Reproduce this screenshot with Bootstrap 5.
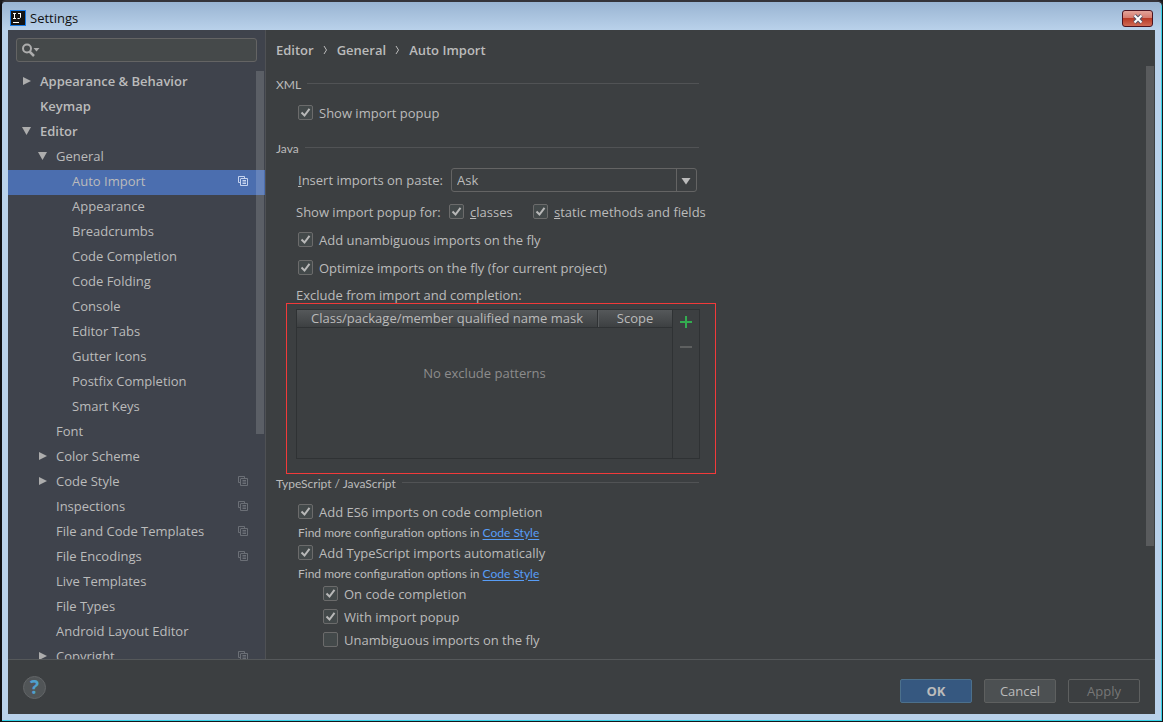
<!DOCTYPE html>
<html lang="en">
<head>
<meta charset="utf-8">
<meta name="viewport" content="width=device-width, initial-scale=1">
<title>Settings</title>
<link href="https://cdn.jsdelivr.net/npm/bootstrap@5.3.0/dist/css/bootstrap.min.css" rel="stylesheet">
<style>
:root { --ink: #bbbbbb; --panel: #3c3f41; --side: #3f434c; --line: #515355; }
body { font-family: "Open Sans", "Noto Sans", sans-serif; font-size: 13px; line-height: 20px; color: var(--ink); background: #1b1b1f; height: 100vh; overflow: hidden; }
.window { height: 100vh; background: #b9d1ea; border: 1px solid #16161a; border-top: 2px solid #35343a; border-left: 2px solid #101014; border-radius: 6px 6px 0 0; padding: 0 7px 7px 6px; box-shadow: inset -1px -1px 0 #35d3e8; }
.titlebar { height: 28px; background: linear-gradient(#99b4d2, #b9d1ea); color: #111; margin: 0 -6px 0 -6px; padding: 0 8px; border-radius: 4px 4px 0 0; }
.titlebar h1 { font-size: 13px; line-height: 20px; font-weight: 400; padding-top: 6px; }
.close-btn { width: 31px; height: 17px; border: 1px solid #4b1320; border-radius: 3px; background: linear-gradient(#e3a399 0, #d5796c 48%, #b83a26 50%, #cf6a55 100%); }
.side { width: 258px; background: var(--side); border-right: 1px solid #4f5154; padding-top: 8px; }
.search-box { height: 24px; margin: 0 8px; background: #45494a; border: 1px solid #646464; border-radius: 3px; }
.search-box input { background: none; border: 0; color: var(--ink); outline: 0; font-size: 13px; }
.tree { margin: 8px 0 0; overflow: hidden; }
.tree a { height: 25px; flex: none; color: var(--ink); text-decoration: none; padding-right: 17px; padding-bottom: 2px; }
.tree a > span { flex: 1; }
.tree a.top { font-weight: 600; padding-left: 32px; }
.tree a.mid { padding-left: 48px; }
.tree a.leaf { padding-left: 64px; }
.tree a.on { background: #4b6eaf; }
.tree .arrow { width: 10px; height: 10px; margin-right: 8px; margin-left: -18px; fill: #adadad; flex: none; }
.tree .copy { width: 10px; height: 10px; fill: none; stroke: #6b6f76; flex: none; }
.tree a.on .copy { stroke: #c5d3ee; }
.side-bar { right: 1px; top: 1px; width: 8px; height: 363px; background: rgba(255,255,255,.15); }
.main-bar { right: 1px; top: 36px; width: 8px; height: 480px; background: #595b5d; }
.main-pane { background: var(--panel); padding: 10px 0 0 10px; overflow: hidden; }
.crumbs { font-weight: 600; gap: 9px; }
.crumbs svg { width: 5px; height: 10px; fill: none; stroke: var(--ink); }
.settings { max-width: 440px; }
.section-head { font-family: Lato, "Open Sans", sans-serif; font-size: 12px; line-height: 20px; font-weight: 400; margin: 0 17px 0 0; gap: 6px; }
.section-head::after { content: ""; flex: 1; height: 1px; background: var(--line); margin-bottom: 3px; }
.first-head { margin-top: 15px; }
.group { padding-left: 22px; }
.wide-group { padding-left: 20px; }
.paste-row { padding-top: 9px; }
.popup-row { padding-top: 10px; white-space: nowrap; }
.popup-row .tick { min-width: 84px; }
.lead-label { width: 153px; flex: none; white-space: nowrap; }
.exclude-label { padding-top: 10px; line-height: 15px; }
.tick { min-height: 20px; margin: 0; padding: 0; gap: 6px; }
.tick .form-check-input { float: none; margin: 0; width: 15px; height: 15px; background-color: #43494a; border: 1px solid #6b6b6b; border-radius: 2px; box-shadow: none; flex: none; }
.tick .form-check-input:checked { background-color: #43494a; border-color: #6b6b6b; background-image: url("data:image/svg+xml,%3Csvg xmlns='http://www.w3.org/2000/svg' viewBox='0 0 13 13'%3E%3Cpath d='M2.500 6.500L5.500 9.500L10.500 2.800' fill='none' stroke='%23b8b8b8' stroke-width='2'/%3E%3C/svg%3E"); background-size: 13px 13px; }
.paste-select { width: 246px; height: 24px; padding: 0 28px 0 5px; font-size: 13px; line-height: 22px; color: var(--ink); border: 1px solid #646464; border-radius: 3px; background-color: var(--panel); background-image: url("data:image/svg+xml,%3Csvg xmlns='http://www.w3.org/2000/svg' viewBox='0 0 20 22'%3E%3Cpath d='M0 0H1V22H0Z' fill='%23646464'/%3E%3Cpath d='M5.5 9H14.5L10 15.5Z' fill='%23bbbbbb'/%3E%3C/svg%3E"); background-size: 20px 22px; background-position: right center; }
.marked { border: 1px solid #f23a3a; margin-left: 10px; padding: 5px 15px 14px 9px; }
.excludes { border: 1px solid #2f3234; height: 150px; }
.excludes table { font-size: 13px; border-collapse: separate; border-spacing: 0; }
.excludes th { height: 18px; padding: 0; font-weight: 400; line-height: 17px; text-align: center; background: linear-gradient(#55585a, #3d4042); border-bottom: 1px solid #2f3234; }
.excludes th + th { border-left: 1px solid #2f3234; width: 75px; box-shadow: inset 1px 0 0 #5a5d5f; }
.excludes td { height: 91px; text-align: center; color: #8c8c8c; padding: 0; }
.tools { width: 27px; border-left: 1px solid #2f3234; padding-top: 6px; }
.tools button { background: none; border: 0; padding: 0; height: 25px; line-height: 0; display: flex; align-items: flex-start; justify-content: center; }
.hint { font-family: Lato, "Open Sans", sans-serif; font-size: 12px; line-height: 21px; }
.hint a { color: #589df6; text-underline-offset: 2px; }
.nested { padding-left: 25px; gap: 3px; }
.bottom { background: var(--panel); border-top: 1px solid #55585a; height: 55px; padding: 0 15px; gap: 12px; }
.bottom .btn { width: 72px; height: 24px; padding: 0; margin-top: 8px; font-size: 13px; line-height: 22px; border-radius: 2px; border: 1px solid #5e6060; background: #4c5052; color: var(--ink); }
.bottom .btn.ok { background: #365880; border-color: #4c708c; font-weight: 700; margin-left: auto; }
.bottom .btn:disabled { background: var(--panel); color: #777; opacity: 1; }
.help { width: 23px; height: 23px; border: 1px solid #626567; background: #515557; border-radius: 50%; padding: 0; color: #4fa0cc; font-size: 19px; line-height: 21px; font-weight: 700; }
</style>
</head>
<body>
<svg class="d-none" xmlns="http://www.w3.org/2000/svg">
  <symbol id="right" viewBox="0 0 10 10"><path d="M1 1L9 5L1 9Z"/></symbol>
  <symbol id="down" viewBox="0 0 10 10"><path d="M0 1H9L4.500 9Z"/></symbol>
  <symbol id="copy" viewBox="0 0 10 10"><path d="M2.500 6.500H.5V.5H6.500V2.500M3 2.500H9.500V9.500H2.500V2.500M4.500 4.500H8M4.500 6H8M4.500 7.500H8"/></symbol>
</svg>
<div class="window d-flex flex-column">
  <header class="titlebar d-flex align-items-start">
    <svg class="mt-2 me-1" width="16" height="16" viewBox="0 0 16 16" aria-hidden="true"><path fill="#187be8" d="M0 0H16V16H0Z"/><path fill="#141414" d="M1 1H15V15H1Z"/><path d="M3 3.500H6M4.500 3.500V8.500M3 8.500H6M8 3.500H11M10.500 3.500V7.500L9.500 8.500H7.500M3 12.500H9" fill="none" stroke="#fff"/></svg>
    <h1 class="m-0">Settings</h1>
    <button class="close-btn ms-auto p-0 d-flex align-items-center justify-content-center mt-2" aria-label="Close"><svg width="12" height="10" viewBox="0 0 12 10"><path d="M2.500 1.500L9.500 8.500M9.500 1.500L2.500 8.500" stroke="#56576b" stroke-width="4"/><path d="M2.500 1.500L9.500 8.500M9.500 1.500L2.500 8.500" stroke="#fff" stroke-width="2"/></svg></button>
  </header>
  <div class="d-flex flex-grow-1 overflow-hidden">
    <nav class="side d-flex flex-column flex-shrink-0" aria-label="Settings pages">
      <div class="search-box d-flex align-items-center flex-shrink-0">
        <svg class="ms-1 flex-shrink-0" width="20" height="14" viewBox="0 0 20 14" aria-hidden="true"><circle cx="6" cy="5.500" r="4" fill="none" stroke="#adadad" stroke-width="2"/><path d="M8.500 8.500L13 13" stroke="#adadad" stroke-width="2.500"/><path d="M12.500 5H18.500L15.500 8.500Z" fill="#adadad"/></svg>
        <input type="text" class="w-100" aria-label="Search settings">
      </div>
      <div class="tree position-relative d-flex flex-column flex-grow-1">
        <a href="#" class="top d-flex align-items-center"><svg class="arrow"><use href="#right"/></svg><span>Appearance &amp; Behavior</span></a>
        <a href="#" class="top d-flex align-items-center"><span>Keymap</span></a>
        <a href="#" class="top d-flex align-items-center"><svg class="arrow"><use href="#down"/></svg><span>Editor</span></a>
        <a href="#" class="mid d-flex align-items-center"><svg class="arrow"><use href="#down"/></svg><span>General</span></a>
        <a href="#" class="leaf on d-flex align-items-center"><span>Auto Import</span><svg class="copy"><use href="#copy"/></svg></a>
        <a href="#" class="leaf d-flex align-items-center"><span>Appearance</span></a>
        <a href="#" class="leaf d-flex align-items-center"><span>Breadcrumbs</span></a>
        <a href="#" class="leaf d-flex align-items-center"><span>Code Completion</span></a>
        <a href="#" class="leaf d-flex align-items-center"><span>Code Folding</span></a>
        <a href="#" class="leaf d-flex align-items-center"><span>Console</span></a>
        <a href="#" class="leaf d-flex align-items-center"><span>Editor Tabs</span></a>
        <a href="#" class="leaf d-flex align-items-center"><span>Gutter Icons</span></a>
        <a href="#" class="leaf d-flex align-items-center"><span>Postfix Completion</span></a>
        <a href="#" class="leaf d-flex align-items-center"><span>Smart Keys</span></a>
        <a href="#" class="mid d-flex align-items-center"><span>Font</span></a>
        <a href="#" class="mid d-flex align-items-center"><svg class="arrow"><use href="#right"/></svg><span>Color Scheme</span></a>
        <a href="#" class="mid d-flex align-items-center"><svg class="arrow"><use href="#right"/></svg><span>Code Style</span><svg class="copy"><use href="#copy"/></svg></a>
        <a href="#" class="mid d-flex align-items-center"><span>Inspections</span><svg class="copy"><use href="#copy"/></svg></a>
        <a href="#" class="mid d-flex align-items-center"><span>File and Code Templates</span><svg class="copy"><use href="#copy"/></svg></a>
        <a href="#" class="mid d-flex align-items-center"><span>File Encodings</span><svg class="copy"><use href="#copy"/></svg></a>
        <a href="#" class="mid d-flex align-items-center"><span>Live Templates</span></a>
        <a href="#" class="mid d-flex align-items-center"><span>File Types</span></a>
        <a href="#" class="mid d-flex align-items-center"><span>Android Layout Editor</span></a>
        <a href="#" class="mid d-flex align-items-center"><svg class="arrow"><use href="#right"/></svg><span>Copyright</span><svg class="copy"><use href="#copy"/></svg></a>
        <div class="side-bar position-absolute"></div>
      </div>
    </nav>
    <main class="main-pane position-relative flex-grow-1">
      <div class="crumbs d-flex align-items-center"><span>Editor</span><svg viewBox="0 0 5 10"><path d="M1 1L3.500 5L1 9"/></svg><span>General</span><svg viewBox="0 0 5 10"><path d="M1 1L3.500 5L1 9"/></svg><span>Auto Import</span></div>
      <form class="settings">
        <h2 class="section-head first-head d-flex align-items-center">XML</h2>
        <div class="group pt-2">
          <div class="tick form-check d-flex align-items-center"><input class="form-check-input" type="checkbox" id="c1" checked><label for="c1">Show import popup</label></div>
        </div>
        <h2 class="section-head d-flex align-items-center mt-3">Java</h2>
        <div class="group paste-row d-flex align-items-center"><label for="paste" class="lead-label"><u>I</u>nsert imports on paste:</label><select id="paste" class="form-select paste-select"><option>Ask</option></select></div>
        <div class="wide-group popup-row d-flex"><span class="lead-label">Show import popup for:</span>
          <div class="tick form-check d-flex align-items-center"><input class="form-check-input" type="checkbox" id="c2" checked><label for="c2"><u>c</u>lasses</label></div>
          <div class="tick form-check d-flex align-items-center"><input class="form-check-input" type="checkbox" id="c3" checked><label for="c3"><u>s</u>tatic methods and fields</label></div>
        </div>
        <div class="group pt-2 d-flex flex-column gap-2">
          <div class="tick form-check d-flex align-items-center"><input class="form-check-input" type="checkbox" id="c4" checked><label for="c4">Add unambiguous imports on the fly</label></div>
          <div class="tick form-check d-flex align-items-center"><input class="form-check-input" type="checkbox" id="c5" checked><label for="c5">Optimize imports on the fly (for current project)</label></div>
        </div>
        <div class="wide-group exclude-label">Exclude from import and completion:</div>
        <div class="marked">
          <div class="excludes d-flex">
            <div class="flex-grow-1"><table class="w-100"><thead><tr><th>Class/package/member qualified name mask</th><th>Scope</th></tr></thead><tbody><tr><td colspan="2">No exclude patterns</td></tr></tbody></table></div>
            <div class="tools d-flex flex-column">
              <button type="button" aria-label="Add"><svg width="12" height="12"><path d="M6 0V12M0 6H12" stroke="#33ad50" stroke-width="2"/></svg></button>
              <button type="button" aria-label="Remove"><svg width="12" height="12"><path d="M0 6H12" stroke="#5e6060" stroke-width="2"/></svg></button>
            </div>
          </div>
        </div>
        <h2 class="section-head d-flex align-items-center">TypeScript / JavaScript</h2>
        <div class="group pt-2">
          <div class="tick form-check d-flex align-items-center"><input class="form-check-input" type="checkbox" id="c6" checked><label for="c6">Add ES6 imports on code completion</label></div>
          <div class="hint">Find more configuration options in <a href="#">Code Style</a></div>
          <div class="tick form-check d-flex align-items-center"><input class="form-check-input" type="checkbox" id="c7" checked><label for="c7">Add TypeScript imports automatically</label></div>
          <div class="hint">Find more configuration options in <a href="#">Code Style</a></div>
          <div class="nested d-flex flex-column">
            <div class="tick form-check d-flex align-items-center"><input class="form-check-input" type="checkbox" id="c8" checked><label for="c8">On code completion</label></div>
            <div class="tick form-check d-flex align-items-center"><input class="form-check-input" type="checkbox" id="c9" checked><label for="c9">With import popup</label></div>
            <div class="tick form-check d-flex align-items-center"><input class="form-check-input" type="checkbox" id="c10"><label for="c10">Unambiguous imports on the fly</label></div>
          </div>
        </div>
      </form>
      <div class="main-bar position-absolute"></div>
    </main>
  </div>
  <footer class="bottom d-flex align-items-center flex-shrink-0">
    <button class="help" type="button" aria-label="Help">?</button>
    <button class="btn ok" type="button">OK</button>
    <button class="btn" type="button">Cancel</button>
    <button class="btn" type="button" disabled>Apply</button>
  </footer>
</div>
<script src="https://cdn.jsdelivr.net/npm/bootstrap@5.3.0/dist/js/bootstrap.bundle.min.js"></script>
</body>
</html>
